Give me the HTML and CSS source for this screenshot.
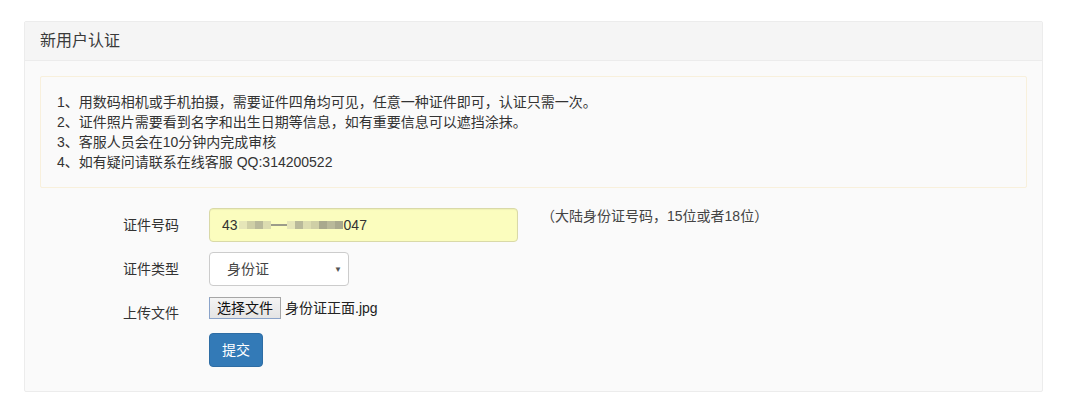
FILE: index.html
```html
<!DOCTYPE html>
<html lang="zh-CN">
<head>
  <meta charset="UTF-8" />
  <title>新用户认证</title>
  <link rel="stylesheet" href="styles.css">
</head>
<body>

<div class="wrap">
  <div class="panel">
    <div class="panel-heading">新用户认证</div>
    <div class="panel-body">

      <!-- 提示 -->
      <div class="alert">
        1、用数码相机或手机拍摄，需要证件四角均可见，任意一种证件即可，认证只需一次。<br>
        2、证件照片需要看到名字和出生日期等信息，如有重要信息可以遮挡涂抹。<br>
        3、客服人员会在10分钟内完成审核<br>
        4、如有疑问请联系在线客服 QQ:314200522
      </div>

      <!-- 表单 -->
      <form class="form">
        <label class="label">证件号码</label>
        <div class="control">
          <div class="input">
            43<span class="blur"><i class="b1"></i><i class="b2"></i><i class="b3"></i><i class="b4"></i><i class="b6"></i><i class="b6"></i><i class="b1"></i><i class="b3"></i><i class="b4"></i><i class="b2"></i><i class="b5"></i><i class="b3"></i><i class="b5"></i></span>047
          </div>
          <span class="help">（大陆身份证号码，15位或者18位）</span>
        </div>

        <label class="label">证件类型</label>
        <div class="control">
          <div class="select">身份证<span class="arrow">▼</span></div>
        </div>

        <label class="label label-file">上传文件</label>
        <div class="control control-file">
          <span class="file-btn">选择文件</span>
          <span class="file-name">身份证正面.jpg</span>
        </div>

        <span></span>
        <div class="control">
          <button type="button" class="btn">提交</button>
        </div>
      </form>

    </div>
  </div>
</div>

</body>
</html>
```

FILE: styles.css
```css
* { box-sizing: border-box; }
body {
  margin: 0;
  background: #fff;
  color: #333;
  font-family: "Liberation Sans", "Noto Sans CJK SC", sans-serif;
  font-size: 14px;
  line-height: 20px;
}

.wrap {
  padding: 21px 24px;
}

.panel {
  width: 1019px;
  background: #fafafa;
  border: 1px solid #ececec;
  border-radius: 2px;
}

.panel-heading {
  background: #f5f5f5;
  border-bottom: 1px solid #ececec;
  padding: 10px 15px;
  font-size: 16px;
  line-height: 17.6px;
  color: #3a3a3a;
}

.panel-body {
  padding: 15px;
}

.alert {
  background: #fafafa;
  border: 1px solid #f8f0dc;
  border-radius: 2px;
  padding: 15px 16px;
  margin-bottom: 20px;
}

.form {
  display: grid;
  grid-template-columns: 139px 1fr;
  column-gap: 30px;
  row-gap: 10px;
  margin-bottom: 9px;
}

.label {
  text-align: right;
  padding-top: 7px;
  color: #333;
}

.control {
  display: flex;
  align-items: center;
}

.input {
  width: 309px;
  height: 34px;
  padding: 6px 12px;
  background: #fbfdbe;
  border: 1px solid #d9d9a8;
  border-radius: 4px;
  box-shadow: inset 0 1px 1px rgba(0,0,0,.05);
  display: flex;
  align-items: center;
}

.blur {
  display: inline-flex;
  align-items: center;
  margin: 0 1px;
}
.blur i {
  display: inline-block;
  width: 8px;
  height: 8px;
}
.blur .b1 { background: #e6e6b8; }
.blur .b2 { background: #cfcfa6; }
.blur .b3 { background: #b9b99a; }
.blur .b4 { background: #dcdcb0; }
.blur .b5 { background: #a9a98e; }
.blur .b6 { background: #9c9c8a; height: 2px; }

.help {
  align-self: flex-start;
  margin: -2px 0 0 23px;
  color: #444;
}

.select {
  position: relative;
  width: 140px;
  height: 34px;
  padding: 6px 17px;
  background: #fff;
  border: 1px solid #ccc;
  border-radius: 4px;
  color: #444;
}

.arrow {
  position: absolute;
  right: 6px;
  top: 7px;
  font-size: 8px;
  color: #555;
}

.control-file {
  align-items: flex-start;
  padding-top: 1px;
}

.file-btn {
  height: 22px;
  padding: 0 7px;
  line-height: 20px;
  background: linear-gradient(#f4f4f4, #e4e4e4);
  border: 1px solid #a6a6a6;
  border-left-color: #8aa3c9;
  border-bottom-color: #8aa3c9;
  color: #111;
}

.file-name {
  margin-left: 4px;
  line-height: 22px;
  color: #222;
}

.btn {
  height: 34px;
  padding: 6px 12px;
  background: #337ab7;
  border: 1px solid #2e6da4;
  border-radius: 4px;
  color: #fff;
  font-family: inherit;
  font-size: 14px;
  line-height: 20px;
  cursor: pointer;
}
```
